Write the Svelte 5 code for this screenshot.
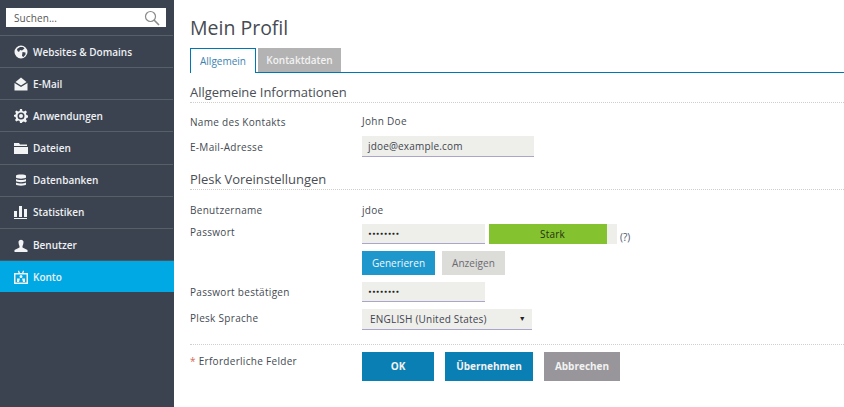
<script>
  const items = [
    ['Websites & Domains', 'globe'], ['E-Mail', 'mail'], ['Anwendungen', 'gear'], ['Dateien', 'folder'],
    ['Datenbanken', 'db'], ['Statistiken', 'bars'], ['Benutzer', 'user'], ['Konto', 'acct']
  ];
</script>

<div class="page">
  <aside class="side">
    <div class="search">
      <span>Suchen...</span>
      <svg width="16" height="16" viewBox="0 0 16 16" fill="none" stroke="#8a8a8a" stroke-width="1.2"><circle cx="6.5" cy="6.5" r="5"/><path d="M10 10l5 5" stroke-width="1.6"/></svg>
    </div>
    <nav>
      {#each items as [label, icon]}
        <div class="item" class:active={label === 'Konto'}>
          <svg class="ico" width="14" height="14" viewBox="0 0 14 14" fill="#f2f3f4">
            {#if icon === 'globe'}
              <path fill-rule="evenodd" d="M7 .5a6.500 6.500 0 1 0 0 13a6.500 6.500 0 0 0 0-13zM6 2l3 0 1.500 1.500L8 5.500 6 5 5 7 3.500 6 3 4zM8.500 7l3 .5 0 2L9.500 12 8 11z"/>
            {:else if icon === 'mail'}
              <path d="M7 .5L12.500 5 7 8.500 1.500 5zM.5 6L7 10l6.500-4v7.500H.5z"/>
            {:else if icon === 'gear'}
              <path fill-rule="evenodd" d="M6 0h2l.4 2 1.500.6L11.600 1.500l1.400 1.400-1.100 1.700.6 1.500 2 .4v2l-2 .4-.6 1.500 1.100 1.700-1.400 1.400-1.700-1.100-1.500.6L8 14H6l-.4-2-1.500-.6-1.700 1.100L1 11.100l1.100-1.700L1.500 7.900l-2-.4V6l2-.4.6-1.500L1 2.900l1.400-1.400 1.700 1.100L5.600 2zM7 3.500a3.500 3.500 0 1 0 0 7a3.500 3.500 0 0 0 0-7zM7 5a2 2 0 1 1 0 4a2 2 0 0 1 0-4z"/>
            {:else if icon === 'folder'}
              <path d="M0 2h5l1 1.500h7V5H0zM0 6h14v7H0z"/>
            {:else if icon === 'db'}
              <path d="M2 2.500C2 1 12 1 12 2.500V4.500C12 6 2 6 2 4.500zM2 6C4 7.300 10 7.300 12 6V8C12 9.500 2 9.500 2 8zM2 9.500C4 10.800 10 10.800 12 9.500V11.500C12 13 2 13 2 11.500z"/>
            {:else if icon === 'bars'}
              <path d="M0 6h3v6H0zM5 1h3v11H5zM10 4h3v8h-3zM0 13h13v1H0z"/>
            {:else if icon === 'user'}
              <path d="M4.500 3.500a2.700 3 0 0 1 5 0C9.500 6 9 7 8.500 8v1.500L13.500 12v2H.5v-2l5-2.500V8C5 7 4.500 6 4.500 3.500z"/>
            {:else}
              <path fill-rule="evenodd" d="M0 3h4.500L4 1l1-.5L6 3h2l1-2.500 1 .5-.5 2H14v11H0zM1.500 4.500v8h11v-8zM7 5a1.500 1.500 0 1 1 0 3a1.500 1.500 0 0 1 0-3zM3 8.500l3 0L5 12H3zM8 8.500h3v3.500H9z"/>
            {/if}
          </svg>
          <span>{label}</span>
        </div>
      {/each}
    </nav>
  </aside>

  <main class="main">
    <h1>Mein Profil</h1>
    <div class="tabs">
      <div class="tab on">Allgemein</div>
      <div class="tab off">Kontaktdaten</div>
    </div>

    <h2 class="first">Allgemeine Informationen</h2>
    <div class="row r1"><label>Name des Kontakts</label><div class="val up">John Doe</div></div>
    <div class="row r2"><label>E-Mail-Adresse</label><div class="inp wide">jdoe@example.com</div></div>

    <h2 class="second">Plesk Voreinstellungen</h2>
    <div class="row r3"><label>Benutzername</label><div class="val">jdoe</div></div>
    <div class="row r4">
      <label class="high">Passwort</label>
      <div class="fields">
        <div class="inp pw dots">••••••••</div>
        <div class="strength">Stark</div>
        <div class="stub"></div>
        <span class="help">(?)</span>
      </div>
    </div>
    <div class="row r5">
      <span></span>
      <div class="fields gap7">
        <div class="btn gen">Generieren</div>
        <div class="btn show">Anzeigen</div>
      </div>
    </div>
    <div class="row r6"><label>Passwort bestätigen</label><div class="inp pw dots">••••••••</div></div>
    <div class="row r7">
      <label class="high">Plesk Sprache</label>
      <div class="inp sel"><span>ENGLISH (United States)</span><i>▼</i></div>
    </div>

    <div class="foot">
      <div class="req"><b>*</b> Erforderliche Felder</div>
      <div class="actions">
        <div class="act ok">OK</div>
        <div class="act apply">Übernehmen</div>
        <div class="act cancel">Abbrechen</div>
      </div>
    </div>
  </main>
</div>

<style>
  :global(body) { margin: 0; background: #fff; }
  .page { display: flex; width: 844px; height: 407px; overflow: hidden; font-family: "Open Sans", sans-serif; color: #3f4550; font-size: 10px; }
  .side { width: 174px; flex: none; background: #3c4350; }
  .search { margin: 8px 8px 0 6px; height: 19px; background: #fff; display: flex; justify-content: space-between; align-items: center; padding: 0 6px 0 8px; font-size: 10px; letter-spacing: .1px; color: #555; box-sizing: border-box; width: 160px; }
  nav { margin-top: 8px; }
  .item { height: 31px; border-top: 1px solid #566069; display: flex; align-items: center; padding-left: 14px; gap: 5px; color: #eef1f4; font-size: 10px; font-weight: 600; margin-right: 1px; }
  .item:nth-child(4) { height: 32px; }
  .item:nth-child(5) > *, .item:nth-child(6) > * { margin-bottom: 2px; }
  .item.active { background: #00a9e4; border-top-color: #4a5560; margin-right: 0; }
  .ico { flex: none; }

  .main { flex: 1; padding-left: 16px; }
  h1 { margin: 15px 0 0; font-size: 19.500px; line-height: 25px; font-weight: 400; color: #474b52; }
  .tabs { margin-top: 8px; height: 24px; border-bottom: 1px solid #0077b0; display: flex; gap: 2px; }
  .tab { height: 24px; line-height: 24px; text-align: center; font-size: 10px; box-sizing: border-box; }
  .on { width: 66px; height: 25px; border: 1px solid #0077b0; border-bottom: none; background: #fff; color: #3e82ae; line-height: 24px; }
  .off { width: 83px; background: #b3b3b3; color: #f2f2f2; font-weight: 600; }
  h2 { margin: 0; font-size: 13px; line-height: 18px; font-weight: 400; color: #4a4e55; padding-bottom: 1px; border-bottom: 1px dotted #cfcfc8; letter-spacing: -.05px; }
  .first { margin-top: 10px; }
  .second { margin-top: 13px; }
  .row { display: grid; grid-template-columns: 172px 1fr; align-items: center; }
  label, .val, .req { color: #444a52; letter-spacing: .3px; }
  .high { margin-top: -4px; }
  .r1 { margin-top: 8px; height: 22px; }
  .r2 { margin-top: 3px; height: 21px; }
  .r3 { margin-top: 10px; height: 20px; }
  .r4 { margin-top: 4px; height: 20px; }
  .r5 { margin-top: 7px; height: 24px; }
  .r6 { margin-top: 7px; height: 20px; }
  .r7 { margin-top: 7px; height: 21px; }
  .up { margin-top: -3px; }
  .inp { background: #eeeeea; border-bottom: 1px solid #a9a6c9; box-sizing: border-box; height: 21px; line-height: 20px; padding-left: 6px; color: #3f4550; font-size: 10px; }
  .wide { width: 172px; letter-spacing: .17px; }
  .pw { width: 123px; height: 20px; }
  .dots { font-size: 6px; font-weight: 700; letter-spacing: 0.1px; color: #222; font-family: "DejaVu Sans", sans-serif; }
  .fields { display: flex; align-items: center; }
  .gap7 { gap: 7px; }
  .strength { width: 118px; height: 20px; margin-left: 4px; padding-left: 9px; box-sizing: border-box; background: #84c32f; text-align: center; line-height: 20px; color: #25300f; letter-spacing: .2px; }
  .stub { width: 10px; height: 20px; background: #eeeeea; }
  .help { margin-left: 3px; margin-top: 5px; color: #4a5568; font-size: 10px; }
  .btn { height: 24px; line-height: 24px; text-align: center; letter-spacing: .05px; }
  .gen { width: 73px; background: #1e97cd; color: #f2f7fb; }
  .show { width: 63px; background: #dcdcd8; color: #6b6b72; }
  .sel { width: 170px; display: flex; justify-content: space-between; padding-left: 8px; padding-right: 6px; letter-spacing: .2px; }
  .sel i { font-style: normal; font-size: 7px; color: #222; }
  .foot { margin-top: 14px; width: 654px; border-top: 1px dotted #cfcfcf; display: grid; grid-template-columns: 172px 1fr; padding-top: 7px; }
  .req { margin-top: 1px; line-height: 16px; }
  .req b { color: #cf6a58; font-weight: 400; }
  .actions { display: flex; gap: 11px; }
  .act { height: 29px; line-height: 29px; text-align: center; color: #f2f2f2; font-weight: 700; font-size: 10px; }
  .ok { width: 72px; background: #0a7fb4; }
  .apply { width: 88px; background: #0a7fb4; }
  .cancel { width: 76px; background: #98969b; }
</style>
